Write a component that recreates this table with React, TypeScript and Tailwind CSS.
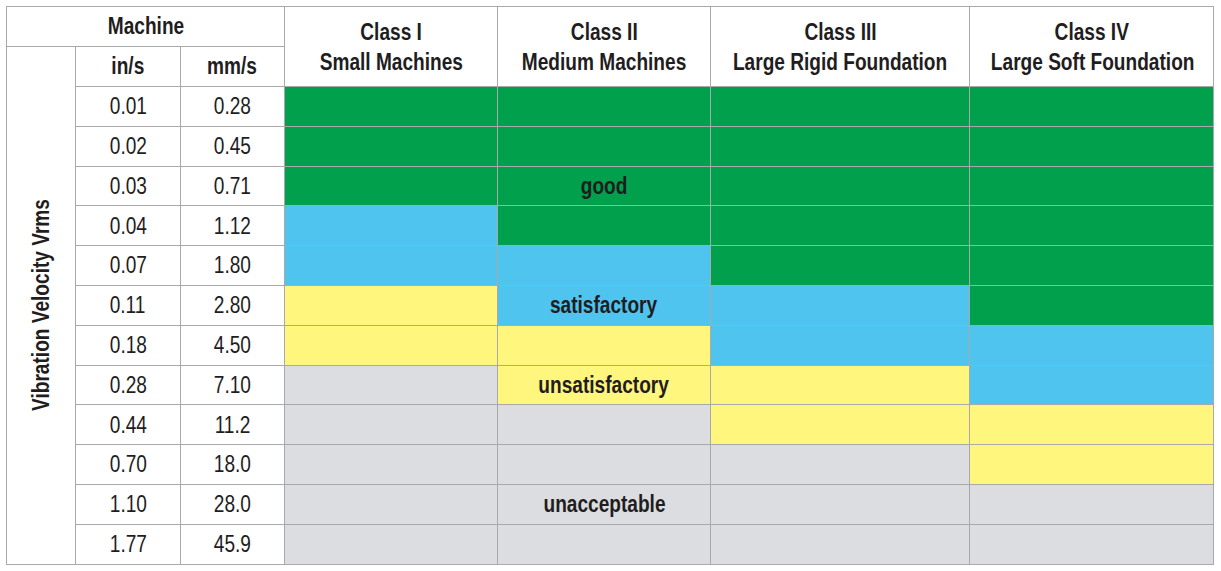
const ROWS = [
  ["0.01", "0.28"],
  ["0.02", "0.45"],
  ["0.03", "0.71"],
  ["0.04", "1.12"],
  ["0.07", "1.80"],
  ["0.11", "2.80"],
  ["0.18", "4.50"],
  ["0.28", "7.10"],
  ["0.44", "11.2"],
  ["0.70", "18.0"],
  ["1.10", "28.0"],
  ["1.77", "45.9"],
];

const CLASSES = [
  ["Class I", "Small Machines"],
  ["Class II", "Medium Machines"],
  ["Class III", "Large Rigid Foundation"],
  ["Class IV", "Large Soft Foundation"],
];

// zone colours, in order from good to unacceptable
const ZONES = ["bg-[#00a04c]", "bg-[#4ec4ef]", "bg-[#fff67d]", "bg-[#dcdde0]"];

// labels written in the Class II column
const LABELS: Record<number, string> = {
  2: "good",
  5: "satisfactory",
  7: "unsatisfactory",
  10: "unacceptable",
};

function zoneFor(classIdx: number, row: number) {
  const good = 3 + classIdx;
  if (row < good) return ZONES[0];
  if (row < good + 2) return ZONES[1];
  if (row < good + 4) return ZONES[2];
  return ZONES[3];
}

const cell = "border border-[#a9a9a9] p-0 text-center align-middle";

// no narrow face installed, so squeeze Liberation Sans a bit
function N({ children }: { children: React.ReactNode }) {
  return <span className="inline-block scale-x-[0.83] whitespace-nowrap">{children}</span>;
}

export default function App() {
  return (
    <div className="min-h-screen bg-white pl-[6px] pt-[6px] font-['Liberation_Sans',Arial,sans-serif] text-[#1f1d1e]">
      <table className="w-[1207px] table-fixed border-collapse">
        <colgroup>
          <col className="w-[69px]" />
          <col className="w-[105px]" />
          <col className="w-[104px]" />
          <col className="w-[213px]" />
          <col className="w-[213px]" />
          <col className="w-[259px]" />
          <col className="w-[244px]" />
        </colgroup>
        <tbody>
          <tr className="h-[40px]">
            <td colSpan={3} className={`${cell} text-[23px] font-bold`}>
              <N>Machine</N>
            </td>
            {CLASSES.map(([title, sub]) => (
              <td key={title} rowSpan={2} className={`${cell} text-[23px] font-bold leading-[30px]`}>
                <div>
                  <N>{title}</N>
                </div>
                <div>
                  <N>{sub}</N>
                </div>
              </td>
            ))}
          </tr>
          <tr className="h-[40px]">
            <td rowSpan={13} className={`${cell} relative`}>
              <div className="absolute left-1/2 top-1/2 -translate-x-1/2 -translate-y-1/2 -rotate-90 scale-x-[0.83] whitespace-nowrap text-[23px] font-bold">
                Vibration Velocity Vrms
              </div>
            </td>
            <td className={`${cell} text-[23px] font-bold`}>
              <N>in/s</N>
            </td>
            <td className={`${cell} text-[23px] font-bold`}>
              <N>mm/s</N>
            </td>
          </tr>
          {ROWS.map(([ins, mms], r) => (
            <tr key={ins} className="h-[39.8px]">
              <td className={`${cell} text-[23px]`}>
                <N>{ins}</N>
              </td>
              <td className={`${cell} text-[23px]`}>
                <N>{mms}</N>
              </td>
              {CLASSES.map((_, c) => (
                <td key={c} className={`${cell} ${zoneFor(c, r)} text-[23px] font-bold`}>
                  {c === 1 && LABELS[r] ? <N>{LABELS[r]}</N> : null}
                </td>
              ))}
            </tr>
          ))}
        </tbody>
      </table>
    </div>
  );
}
